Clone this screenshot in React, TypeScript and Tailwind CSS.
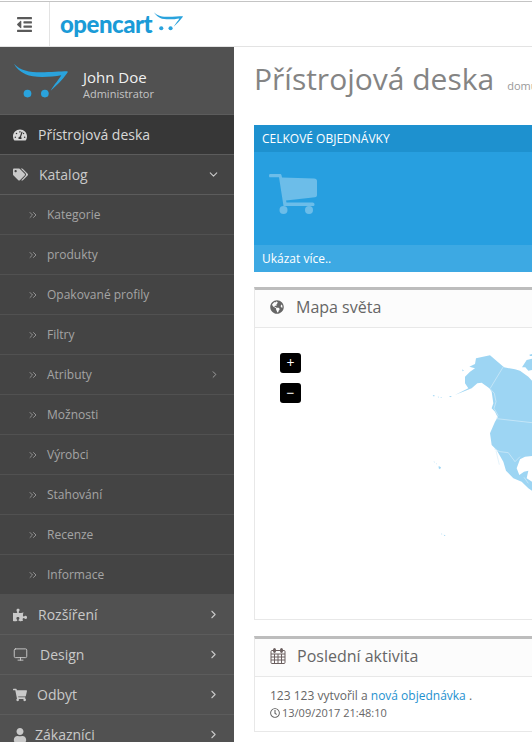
import React from "react";
import {
  FaOutdent, FaTachometerAlt, FaTags, FaPuzzlePiece, FaShoppingCart, FaUser, FaGlobeAmericas, FaRegClock,
} from "react-icons/fa";
import { ChevronRight, ChevronDown, ChevronsRight, Monitor } from "lucide-react";

const sub = ["Kategorie", "produkty", "Opakované profily", "Filtry", "Atributy", "Možnosti", "Výrobci", "Stahování", "Recenze", "Informace"];

function Cart({ className }: { className: string }) {
  return (
    <svg viewBox="0 0 56 36" className={className} fill="#2aa3dd">
      <path d="M0 0 C6 7 16 9 28 9 C38 9 48 8 55 8 C56 8 56 9 55 10 C50 17 44 23 38 28 C42 21 47 16 49 12 C38 14 20 15 12 11 C6 8 2 4 0 0Z" />
      <circle cx="14" cy="31" r="4" />
      <circle cx="32" cy="31" r="4" />
    </svg>
  );
}

function BigCart() {
  return (
    <svg viewBox="0 0 48 40" className="h-10 w-12" fill="#6cbde9">
      <path d="M1 0H11C12 0 12.500 .5 12.700 2L13 3.500L45 4.500C47 4.500 48 5.500 48 7V21C48 22 47.500 23 46 23.200L17 26.500L17.500 28.500H43.500C45 28.500 45.500 29.500 45.500 30.500C45.500 31.500 45 32 43.500 32H14.500L10 3.300H1C-.3 3.300 -.3 0 1 0Z" />
      <circle cx="14.500" cy="36" r="4" />
      <circle cx="40" cy="36" r="4" />
    </svg>
  );
}

function CalendarIcon() {
  return (
    <svg viewBox="0 0 16 16" className="h-4 w-4" fill="none" stroke="#6b5f5f" strokeWidth="1">
      <rect x="1" y="2.500" width="14" height="13" rx="1" />
      <path d="M1 6H15M1 9H15M1 12H15M4.500 6V15.500M8 6V15.500M11.500 6V15.500" />
      <rect x="3.500" y=".5" width="2" height="4" rx="1" fill="#6b5f5f" />
      <rect x="10.500" y=".5" width="2" height="4" rx="1" fill="#6b5f5f" />
    </svg>
  );
}

function TopRow({ icon, label, gap }: { icon: React.ReactNode; label: string; gap: string }) {
  return (
    <div className="flex h-10 items-center border-b border-[#5c5c5c] bg-[#515151] pl-3 pr-[14px] text-[#c9c9c9]">
      <span className="flex w-4 justify-center text-[14px]">{icon}</span>
      <span className={`text-[14px] ${gap}`}>{label}</span>
      <ChevronRight size={13} strokeWidth={2} className="ml-auto" />
    </div>
  );
}

function WorldMap() {
  return (
    <svg viewBox="0 0 396 630" className="absolute left-[145px] top-[12px] h-[210px] w-[132px]">
      <path fill="#9dd5f3" d="M228 55L270 46L312 82L345 88L360 92L385 110L396 122V348L375 350L360 358L350 385L358 405L372 395L385 392L380 415L396 425V452L385 445L365 425L340 415L318 392L310 365L290 330L275 315L270 280L285 245L293 232L285 215L275 205L280 190L275 155L268 145L245 128L232 130L215 145L165 165L205 145L195 130L195 110L210 95L225 85L208 80L225 72Z" />
      <path fill="#9dd5f3" d="M366 82L380 60L396 56V90L385 92L376 82ZM388 44L396 42V48L390 48ZM186 88L192 92L188 94ZM116 378L123 382L120 388L116 385ZM101 364L104 366L103 368ZM108 370L111 372L109 373ZM98 165L104 166L102 170ZM113 170L117 170L116 173ZM121 171L125 171L124 174ZM148 168L156 168L150 172ZM124 580L127 582L125 584ZM131 584L137 586L133 588Z" />
      <path fill="none" stroke="#d6edf9" strokeWidth="2" d="M310 80L270 146L283 160L288 185L282 205L294 226L290 236L396 248M283 327L300 335L325 338L345 365L360 350M288 332L298 374M372 412L385 430" />
    </svg>
  );
}

export default function App() {
  return (
    <div className="flex h-[742px] w-[532px] flex-col overflow-hidden bg-white font-['Open_Sans',sans-serif] text-[12px] text-[#666]">
      <header className="mt-px flex h-[46px] shrink-0 border-t border-b border-t-[#c4c4c4] border-b-[#e3e3e3] bg-white">
        <div className="flex w-[50px] shrink-0 items-center justify-center border-r border-[#e3e3e3] text-[#5a5a5a]">
          <FaOutdent className="text-[17px]" />
        </div>
        <div className="flex items-center pl-[10px]">
          <span className="font-['Lato',sans-serif] text-[24px] leading-none font-black tracking-[-0.5px] text-[#1a9bd7]">opencart</span>
          <Cart className="mb-[6px] ml-[2px] h-[19px] w-[29px]" />
        </div>
      </header>

      <div className="flex min-h-0 flex-1">
        <aside className="w-[234px] shrink-0 bg-[#515151]">
          <div className="flex h-[68px] items-center border-b border-[#5c5c5c] pl-[14px]">
            <Cart className="h-[38px] w-[54px]" />
            <div className="mt-[7px] ml-[15px]">
              <div className="text-[15px] leading-[18px] text-[#f0f0f0]">John Doe</div>
              <div className="text-[11px] leading-[15px] text-[#c4c4c4]">Administrator</div>
            </div>
          </div>
          <div className="flex h-10 items-center border-b border-[#5c5c5c] bg-[#373737] pl-3 text-[#d8d8d8]">
            <span className="flex w-4 justify-center text-[14px]"><FaTachometerAlt /></span>
            <span className="ml-[10px] text-[14px]">Přístrojová deska</span>
          </div>
          <div className="flex h-10 items-center border-b border-[#5c5c5c] bg-[#444] pl-3 pr-[14px] text-[#c9c9c9]">
            <span className="flex w-4 justify-center text-[15px]"><FaTags /></span>
            <span className="ml-[11px] text-[14px]">Katalog</span>
            <ChevronDown size={13} strokeWidth={2} className="ml-auto" />
          </div>
          {sub.map((s) => (
            <div key={s} className="flex h-10 items-center border-b border-[#515151] bg-[#444] pr-[14px] pl-[27px] text-[#a5a5a5]">
              <ChevronsRight size={12} strokeWidth={1.6} />
              <span className="ml-[8px] text-[12px]">{s}</span>
              {s === "Atributy" && <ChevronRight size={11} strokeWidth={2} className="ml-auto" />}
            </div>
          ))}
          <TopRow icon={<FaPuzzlePiece />} label="Rozšíření" gap="ml-[10px]" />
          <TopRow icon={<Monitor size={15} strokeWidth={1.5} />} label="Design" gap="ml-3" />
          <TopRow icon={<FaShoppingCart />} label="Odbyt" gap="ml-[9px]" />
          <TopRow icon={<FaUser />} label="Zákazníci" gap="ml-[7px]" />
        </aside>

        <main className="min-w-0 flex-1 pl-5">
          <div className="flex h-[78px] items-center pb-[14px]">
            <h1 className="text-[30px] leading-none whitespace-nowrap text-[#848484]">Přístrojová deska</h1>
            <span className="mt-[15px] ml-[13px] text-[11px] text-[#999]">domů</span>
          </div>

          <section className="h-[147px] bg-[#279fe0] text-white">
            <div className="flex h-[27px] items-center bg-[#1e91cf] pl-2 text-[12px]">CELKOVÉ OBJEDNÁVKY</div>
            <div className="flex h-[93px] items-start pt-[22px] pl-[15px]">
              <BigCart />
            </div>
            <div className="flex h-[27px] items-center bg-[#3da9e3] pl-2 text-[12px]">Ukázat více..</div>
          </section>

          <section className="mt-[15px] h-[333px] border-t-[3px] border-b border-l border-[#e8e8e8] border-t-[#bdbdbd]">
            <div className="flex h-[38px] items-center border-b border-[#e8e8e8] bg-[#fcfcfc] pb-[3px] pl-[15px]">
              <FaGlobeAmericas className="text-[14px] text-[#666]" />
              <span className="ml-[12px] text-[16px] text-[#666]">Mapa světa</span>
            </div>
            <div className="relative h-[291px]">
              <div className="absolute top-[25px] left-[25px] flex h-5 w-[21px] items-center justify-center rounded-[3px] bg-black text-[14px] leading-none text-white">+</div>
              <div className="absolute top-[55px] left-[25px] flex h-5 w-[21px] items-center justify-center rounded-[3px] bg-black text-[14px] leading-none text-white">−</div>
              <WorldMap />
            </div>
          </section>

          <section className="mt-[16px] border-t-[3px] border-l border-[#e8e8e8] border-t-[#bdbdbd]">
            <div className="flex h-[38px] items-center border-b border-[#e8e8e8] bg-[#fcfcfc] pb-[3px] pl-[15px]">
              <CalendarIcon />
              <span className="ml-[11px] text-[16px] text-[#666]">Poslední aktivita</span>
            </div>
            <div className="h-[55px] border-b border-[#e8e8e8] pt-[10px] pl-[15px] text-[12px] leading-[18px]">
              <div>123 123 vytvořil a <span className="text-[#1e91cf]">nová objednávka</span> .</div>
              <div className="flex items-center gap-[2px] text-[11px] leading-[16px]"><FaRegClock className="text-[10px]" /> 13/09/2017 21:48:10</div>
            </div>
          </section>
        </main>
      </div>
    </div>
  );
}
